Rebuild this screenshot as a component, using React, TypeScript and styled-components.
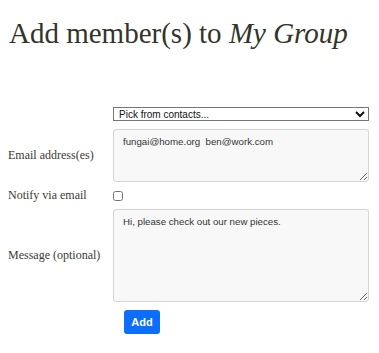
import React, { useState } from 'react';
import styled, { createGlobalStyle } from 'styled-components';

const GlobalStyle = createGlobalStyle`
  body {
    margin: 8px;
    background: #ffffff;
    font-family: "Liberation Serif", serif;
  }
`;

const Page = styled.div`
  width: 363px;
`;

const Title = styled.h1`
  margin: 8px 0 0 1px;
  font-family: "Liberation Serif", "DejaVu Serif", serif;
  font-weight: normal;
  font-size: 29px;
  line-height: 34px;
  color: #33352a;

  em {
    font-style: italic;
  }
`;

const Form = styled.form`
  display: grid;
  grid-template-columns: 105px 256px;
  align-items: center;
  row-gap: 8px;
  margin-top: 57px;
`;

const Label = styled.label`
  font-family: "Liberation Serif", serif;
  font-size: 12px;
  line-height: 11px;
  color: #3b3b36;
`;

const Select = styled.select`
  height: 14px;
  padding: 0 1px;
  border: 1px solid #767676;
  border-radius: 0;
  background: #ffffff;
  font-family: "Liberation Sans", Arial, sans-serif;
  font-size: 10px;
  line-height: 12px;
  color: #111;
`;

const Area = styled.textarea<{ $h: number }>`
  box-sizing: border-box;
  height: ${(p) => p.$h}px;
  padding: 6px 9px;
  border: 1px solid #d4d4d4;
  border-radius: 3px;
  background: #f8f8f8;
  font-family: "Liberation Sans", Arial, sans-serif;
  font-size: 9.7px;
  color: #333;
  resize: vertical;
`;

const Check = styled.input`
  width: 10px;
  height: 10px;
  margin: 0;
`;

const Actions = styled.div`
  grid-column: 2;
  padding-left: 11px;
`;

const AddButton = styled.button`
  width: 36px;
  height: 24px;
  border: none;
  border-radius: 3px;
  background: #0d6efd;
  color: #ffffff;
  font-family: "Liberation Sans", Arial, sans-serif;
  font-size: 11px;
  font-weight: bold;
  cursor: pointer;
`;

export default function App() {
  const [emails, setEmails] = useState('fungai@home.org  ben@work.com');
  const [message, setMessage] = useState('Hi, please check out our new pieces.');
  const [notify, setNotify] = useState(false);

  return (
    <Page>
      <GlobalStyle />
      <Title>
        Add member(s) to <em>My Group</em>
      </Title>
      <Form onSubmit={(e) => e.preventDefault()}>
        <span />
        <Select defaultValue="">
          <option value="">Pick from contacts...</option>
        </Select>

        <Label htmlFor="emails">Email address(es)</Label>
        <Area id="emails" $h={53} value={emails} onChange={(e) => setEmails(e.target.value)} />

        <Label htmlFor="notify">Notify via email</Label>
        <Check id="notify" type="checkbox" checked={notify} onChange={(e) => setNotify(e.target.checked)} />

        <Label htmlFor="message">Message (optional)</Label>
        <Area id="message" $h={93} value={message} onChange={(e) => setMessage(e.target.value)} />

        <Actions>
          <AddButton type="submit">Add</AddButton>
        </Actions>
      </Form>
    </Page>
  );
}
